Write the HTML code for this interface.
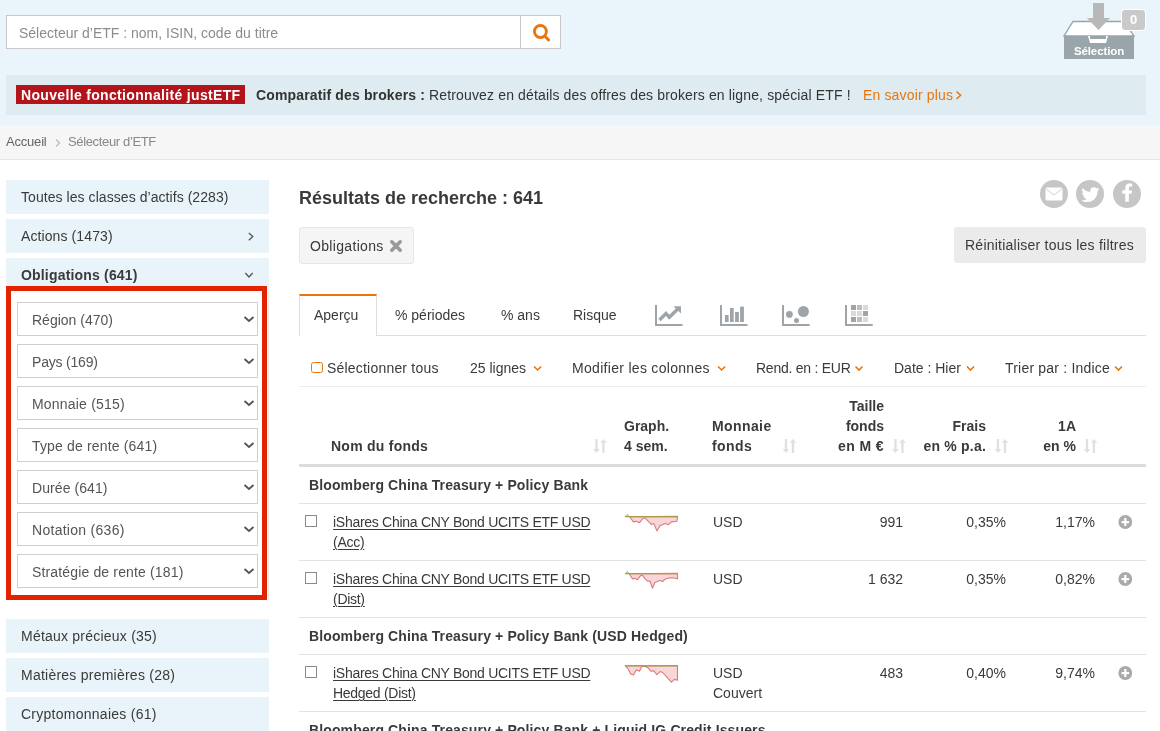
<!DOCTYPE html>
<html><head><meta charset="utf-8">
<style>
*{box-sizing:border-box;margin:0;padding:0}
html,body{width:1160px;height:731px;overflow:hidden;background:#fff}
body{position:relative;font-family:"Liberation Sans",sans-serif;font-size:14px;color:#3a3a3a;line-height:20px;-webkit-font-smoothing:antialiased}
.a{will-change:transform}
.a{position:absolute;white-space:nowrap}
.hdr{position:absolute;left:0;top:0;width:1160px;height:125px;background:#e9f5fa}
.search{position:absolute;left:6px;top:15px;width:555px;height:34px;background:#fff;border:1px solid #c8c8c8}
.search .div{position:absolute;left:513px;top:0;width:1px;height:32px;background:#c8c8c8}
.banner{position:absolute;left:6px;top:75px;width:1140px;height:40px;background:#deebf1}
.badge{position:absolute;left:16px;top:85px;width:229px;height:19px;background:#b3131a}
.bc{position:absolute;left:0;top:125px;width:1160px;height:35px;background:#f6f6f6;border-bottom:1px solid #e6e6e6}
.side{position:absolute;left:6px;width:263px;height:34px;background:#e8f4fa}
.redbox{position:absolute;left:6px;top:286px;width:261px;height:314px;border:5px solid #e22300;background:#fff}
.sel{position:absolute;left:17px;width:241px;height:34px;border:1px solid #cfcfcf;background:#fff}
.chev{position:absolute}
.line{position:absolute;height:1px;background:#e3e3e3}
.b{font-weight:bold}
.ul{text-decoration:underline;text-underline-offset:2px;text-decoration-thickness:1px}
.cb{position:absolute;width:12px;height:12px;border:1px solid #8a8a8a;background:#fff}
.r{text-align:right}
</style></head><body>

<!-- header -->
<div class="hdr"></div>
<div class="search"><div class="div"></div></div>
<div class="a" style="left:19px;top:23px;color:#8c8c8c">Sélecteur d’ETF : nom, ISIN, code du titre</div>
<svg class="a" style="left:530px;top:21px" width="22" height="22" viewBox="0 0 22 22">
 <circle cx="10.4" cy="10.5" r="6" fill="none" stroke="#e8760c" stroke-width="2.8"/>
 <line x1="14.8" y1="15" x2="18.6" y2="19" stroke="#e8760c" stroke-width="2.9" stroke-linecap="round"/>
</svg>

<!-- selection icon -->
<svg class="a" style="left:1060px;top:0" width="100" height="62" viewBox="1060 0 100 62">
 <polygon points="1073,21.5 1124,21.5 1134,36 1064,36" fill="#fff" stroke="#9aa5ab" stroke-width="1.4"/>
 <rect x="1064" y="36" width="70" height="23" fill="#9aa5ab"/>
 <polygon points="1088,36 1108,36 1106,43 1090,43" fill="#fff"/>
 <rect x="1090" y="36" width="16" height="3" fill="#9aa5ab"/>
 <rect x="1093" y="3" width="11" height="15" fill="#b8b8b8"/>
 <polygon points="1087,18 1110,18 1098.5,30" fill="#b8b8b8"/>
 <rect x="1121.5" y="9.5" width="24" height="21" rx="3.5" fill="#cacaca" stroke="#fff" stroke-width="1"/>
</svg>
<div class="a b" style="left:1064px;top:42.5px;width:70px;text-align:center;color:#fff;font-size:11.5px;line-height:16px;letter-spacing:-0.1px">Sélection</div>
<div class="a b" style="left:1122px;top:10px;width:23px;text-align:center;color:#fff;font-size:13px;line-height:20px">0</div>

<!-- banner -->
<div class="banner"></div>
<div class="badge"></div>
<div class="a b" style="left:21px;top:85px;color:#fff;letter-spacing:0.33px">Nouvelle fonctionnalité justETF</div>
<div class="a" style="left:256px;top:85px;color:#333;letter-spacing:0.14px"><b>Comparatif des brokers :</b> Retrouvez en détails des offres des brokers en ligne, spécial ETF !</div>
<div class="a" style="left:863px;top:85px;color:#e8760c;letter-spacing:0.15px">En savoir plus</div>
<svg class="a" style="left:954px;top:89px" width="10" height="12"><polyline points="2.5,2.5 6.6,6.3 2.5,10" fill="none" stroke="#e8760c" stroke-width="1.5"/></svg>

<!-- breadcrumb -->
<div class="bc"></div>
<div class="a" style="left:6px;top:132px;color:#666;font-size:13px;letter-spacing:-0.2px">Accueil</div>
<svg class="a" style="left:54px;top:138px" width="8" height="10"><polyline points="2,1.5 5.5,5 2,8.5" fill="none" stroke="#bbb" stroke-width="1.2"/></svg>
<div class="a" style="left:68px;top:132px;color:#888;font-size:13px;letter-spacing:-0.35px">Sélecteur d’ETF</div>

<!-- sidebar -->
<div class="side" style="top:180px"></div>
<div class="a" style="left:21px;top:187px;letter-spacing:0.06px">Toutes les classes d’actifs (2283)</div>
<div class="side" style="top:219px"></div>
<div class="a" style="left:21px;top:226px;letter-spacing:0.1px">Actions (1473)</div>
<div class="side" style="top:258px;height:34px"></div>
<div class="a b" style="left:21px;top:265px;letter-spacing:0.18px">Obligations (641)</div>
<div class="a" style="left:267px;top:291px;width:2px;height:308px;background:#f3f7f9;border-right:1px solid #ececec"></div>
<div class="redbox"></div>
<div class="sel" style="top:302px"></div><div class="a" style="left:32px;top:310px;color:#555">Région (470)</div>
<div class="sel" style="top:344px"></div><div class="a" style="left:32px;top:352px;color:#555;letter-spacing:-0.2px">Pays (169)</div>
<div class="sel" style="top:386px"></div><div class="a" style="left:32px;top:394px;color:#555;letter-spacing:0.2px">Monnaie (515)</div>
<div class="sel" style="top:428px"></div><div class="a" style="left:32px;top:436px;color:#555;letter-spacing:0.16px">Type de rente (641)</div>
<div class="sel" style="top:470px"></div><div class="a" style="left:32px;top:478px;color:#555;letter-spacing:0.08px">Durée (641)</div>
<div class="sel" style="top:512px"></div><div class="a" style="left:32px;top:520px;color:#555;letter-spacing:0.28px">Notation (636)</div>
<div class="sel" style="top:554px"></div><div class="a" style="left:32px;top:562px;color:#555;letter-spacing:0.15px">Stratégie de rente (181)</div>
<svg class="a" style="left:0;top:0" width="290" height="731">
 <g fill="none" stroke="#555" stroke-width="1.8">
  <polyline points="248.8,233 252.8,236.6 248.8,240.2" stroke-width="1.3"/>
  <polyline points="245.3,273 249,277 252.7,273" stroke-width="1.3"/>
  <polyline points="244.5,317 249,321 253.5,317"/>
  <polyline points="244.5,359 249,363 253.5,359"/>
  <polyline points="244.5,401 249,405 253.5,401"/>
  <polyline points="244.5,443 249,447 253.5,443"/>
  <polyline points="244.5,485 249,489 253.5,485"/>
  <polyline points="244.5,527 249,531 253.5,527"/>
  <polyline points="244.5,569 249,573 253.5,569"/>
  <polyline points="248,671.5 252,675.6 248,679.7" stroke-width="1.3"/>
 </g>
</svg>
<div class="side" style="top:619px"></div>
<div class="a" style="left:21px;top:626px;letter-spacing:0.22px">Métaux précieux (35)</div>
<div class="side" style="top:658px"></div>
<div class="a" style="left:21px;top:665px;letter-spacing:0.24px">Matières premières (28)</div>
<div class="side" style="top:697px"></div>
<div class="a" style="left:21px;top:704px;letter-spacing:0.26px">Cryptomonnaies (61)</div>

<!-- main -->
<div class="a b" style="left:299px;top:186px;font-size:18px;line-height:24px">Résultats de recherche : 641</div>
<svg class="a" style="left:1036px;top:176px" width="112" height="36" viewBox="1036 176 112 36">
 <circle cx="1054" cy="194" r="14" fill="#c6c6c6"/>
 <circle cx="1090" cy="194" r="14" fill="#c6c6c6"/>
 <circle cx="1127" cy="194" r="14" fill="#c6c6c6"/>
 <rect x="1045.5" y="187.5" width="17" height="13" rx="1.5" fill="#fff"/>
 <path transform="translate(1081.3,185.6) scale(0.0355)" fill="#fff" d="M459.37 151.716c.325 4.548.325 9.097.325 13.645 0 138.72-105.583 298.558-298.558 298.558-59.452 0-114.68-17.219-161.137-47.106 8.447.974 16.568 1.299 25.34 1.299 49.055 0 94.213-16.568 130.274-44.832-46.132-.975-84.792-31.188-98.112-72.772 6.498.974 12.995 1.624 19.818 1.624 9.421 0 18.843-1.3 27.614-3.573-48.081-9.747-84.143-51.98-84.143-102.985v-1.299c13.969 7.797 30.214 12.67 47.431 13.319-28.264-18.843-46.781-51.005-46.781-87.391 0-19.492 5.197-37.36 14.294-52.954 51.655 63.675 129.3 105.258 216.365 109.807-1.624-7.797-2.599-15.918-2.599-24.04 0-57.828 46.782-104.934 104.934-104.934 30.213 0 57.502 12.67 76.67 33.137 23.715-4.548 46.456-13.32 66.599-25.34-7.798 24.366-24.366 44.833-46.132 57.827 21.117-2.273 41.584-8.122 60.426-16.243-14.292 20.791-32.161 39.308-52.628 54.253z"/>
 <path transform="translate(1121.5,183.4) scale(0.036)" fill="#fff" d="M279.14 288l14.22-92.66h-88.91v-60.13c0-25.35 12.42-50.06 52.24-50.06h40.42V6.26S260.43 0 225.36 0c-73.22 0-121.08 44.38-121.08 121.06v70.62H22.89V288h81.39v224h100.17V288z"/>
 <polyline points="1045.5,188.5 1054,195 1062.5,188.5" fill="none" stroke="#c6c6c6" stroke-width="0.8"/>
</svg>

<div class="a" style="left:299px;top:227px;width:115px;height:37px;background:#f5f5f5;border:1px solid #e6e6e6;border-radius:3px"></div>
<div class="a" style="left:310px;top:236px;letter-spacing:0.33px">Obligations</div>
<svg class="a" style="left:389px;top:239px" width="14" height="14" viewBox="0 0 14 14"><path d="M2.8 2.8L11.2 11.2M11.2 2.8L2.8 11.2" stroke="#9a9a9a" stroke-width="3.6" stroke-linecap="round"/></svg>

<div class="a" style="left:954px;top:227px;width:192px;height:36px;background:#ebebeb;border-radius:3px"></div>
<div class="a" style="left:965px;top:235px;letter-spacing:0.24px">Réinitialiser tous les filtres</div>

<!-- tabs -->
<div class="line" style="left:376px;top:335px;width:770px;background:#dedede"></div>
<div class="a" style="left:299px;top:294px;width:78px;height:42px;border:1px solid #dedede;border-top:2px solid #e8760c;border-bottom:none;background:#fff"></div>
<div class="a" style="left:314px;top:305px">Aperçu</div>
<div class="a" style="left:395px;top:305px">% périodes</div>
<div class="a" style="left:501px;top:305px">% ans</div>
<div class="a" style="left:573px;top:305px">Risque</div>

<!-- toolbar -->
<div class="line" style="left:299px;top:386px;width:847px;background:#ececec"></div>
<div class="a" style="left:311px;top:362px;width:11.5px;height:11.2px;border:1.3px solid #e8760c;border-radius:2.5px"></div>
<div class="a" style="left:327px;top:358px;letter-spacing:0.2px">Sélectionner tous</div>
<div class="a" style="left:470px;top:358px">25 lignes</div>
<div class="a" style="left:572px;top:358px;letter-spacing:0.3px">Modifier les colonnes</div>
<div class="a" style="left:756px;top:358px;letter-spacing:-0.25px">Rend. en : EUR</div>
<div class="a" style="left:894px;top:358px">Date : Hier</div>
<div class="a" style="left:1005px;top:358px;letter-spacing:0.2px">Trier par : Indice</div>

<!-- table header -->
<div class="a b" style="left:331px;top:436px;letter-spacing:0.25px">Nom du fonds</div>
<div class="a b" style="left:624px;top:416px">Graph.<br>4 sem.</div>
<div class="a b" style="left:712px;top:416px;letter-spacing:0.4px">Monnaie<br>fonds</div>
<div class="a b r" style="left:784px;top:396px;width:100px">Taille<br>fonds<br><span style="letter-spacing:0.4px">en M €</span></div>
<div class="a b r" style="left:886px;top:416px;width:100px">Frais<br><span style="letter-spacing:0.2px">en % p.a.</span></div>
<div class="a b r" style="left:976px;top:416px;width:100px">1A<br>en %</div>
<div class="a" style="left:299px;top:464px;width:847px;height:3px;background:#dcdcdc"></div>

<!-- rows -->
<div class="a b" style="letter-spacing:0.13px;left:309px;top:475px">Bloomberg China Treasury + Policy Bank</div>
<div class="line" style="left:299px;top:503px;width:847px"></div>
<div class="cb" style="left:305px;top:515px"></div>
<div class="a ul" style="letter-spacing:-0.28px;left:333px;top:512px;line-height:20px">iShares China CNY Bond UCITS ETF USD<br>(Acc)</div>
<div class="a" style="left:713px;top:512px">USD</div>
<div class="a r" style="left:803px;top:512px;width:100px">991</div>
<div class="a r" style="left:906px;top:512px;width:100px">0,35%</div>
<div class="a r" style="left:995px;top:512px;width:100px">1,17%</div>

<div class="line" style="left:299px;top:560px;width:847px"></div>
<div class="cb" style="left:305px;top:572px"></div>
<div class="a ul" style="letter-spacing:-0.28px;left:333px;top:569px;line-height:20px">iShares China CNY Bond UCITS ETF USD<br>(Dist)</div>
<div class="a" style="left:713px;top:569px">USD</div>
<div class="a r" style="left:803px;top:569px;width:100px">1 632</div>
<div class="a r" style="left:906px;top:569px;width:100px">0,35%</div>
<div class="a r" style="left:995px;top:569px;width:100px">0,82%</div>

<div class="line" style="left:299px;top:617px;width:847px"></div>
<div class="a b" style="letter-spacing:0.13px;left:309px;top:626px">Bloomberg China Treasury + Policy Bank (USD Hedged)</div>
<div class="line" style="left:299px;top:654px;width:847px"></div>
<div class="cb" style="left:305px;top:666px"></div>
<div class="a ul" style="letter-spacing:-0.28px;left:333px;top:663px;line-height:20px">iShares China CNY Bond UCITS ETF USD<br>Hedged (Dist)</div>
<div class="a" style="left:713px;top:663px;line-height:20px">USD<br>Couvert</div>
<div class="a r" style="left:803px;top:663px;width:100px">483</div>
<div class="a r" style="left:906px;top:663px;width:100px">0,40%</div>
<div class="a r" style="left:995px;top:663px;width:100px">9,74%</div>
<div class="line" style="left:299px;top:711px;width:847px"></div>
<div class="a b" style="letter-spacing:0.13px;left:309px;top:720px">Bloomberg China Treasury + Policy Bank + Liquid IG Credit Issuers</div>


<!-- tab icons -->
<svg class="a" style="left:640px;top:290px" width="250" height="45" viewBox="640 290 250 45">
 <g fill="#9ea4a7">
  <rect x="655" y="305" width="2" height="21"/><rect x="655" y="324" width="27.5" height="2"/>
  <polyline points="659.5,320 666,313.5 669.3,317.3 677.5,309.2" fill="none" stroke="#9ea4a7" stroke-width="3.4"/>
  <polygon points="673.5,306.2 681,306.2 681,313.6"/>
  <rect x="720" y="305" width="2" height="21"/><rect x="720" y="324" width="27.5" height="2"/>
  <rect x="725" y="315" width="3.6" height="7"/><rect x="730" y="308" width="3.7" height="14"/>
  <rect x="735.1" y="312" width="3.8" height="10"/><rect x="740.1" y="306.6" width="3.8" height="15.4"/>
  <rect x="782" y="305" width="2" height="21"/><rect x="782" y="324" width="27.6" height="2"/>
  <circle cx="789.4" cy="314.4" r="3.4"/><circle cx="796.5" cy="320.4" r="2.5"/><circle cx="803.4" cy="311.5" r="5.5"/>
  <rect x="845" y="305" width="2" height="21"/><rect x="845" y="324" width="27.7" height="2"/>
 </g>
 <g>
  <rect x="851" y="305" width="5" height="5" fill="#a3a3a3"/><rect x="857" y="305" width="5" height="5" fill="#bdbdbd"/><rect x="863" y="305" width="5" height="5" fill="#dadada"/>
  <rect x="851" y="311" width="5" height="5" fill="#dadada"/><rect x="857" y="311" width="5" height="5" fill="#dadada"/><rect x="863" y="311" width="5" height="5" fill="#a3a3a3"/>
  <rect x="851" y="317" width="5" height="5" fill="#a3a3a3"/><rect x="857" y="317" width="5" height="5" fill="#bdbdbd"/><rect x="863" y="317" width="5" height="5" fill="#dadada"/>
 </g>
</svg>
<!-- toolbar chevrons -->
<svg class="a" style="left:0;top:0" width="1160" height="731" viewBox="0 0 1160 731">
 <g fill="none" stroke="#e8760c" stroke-width="1.6">
  <polyline points="534,366.5 537.6,370 541.2,366.5"/>
  <polyline points="718,366.5 721.6,370 725.2,366.5"/>
  <polyline points="855.5,366.5 859,370 862.5,366.5"/>
  <polyline points="967,366.5 970.5,370 974,366.5"/>
  <polyline points="1115,366.5 1118.5,370 1122,366.5"/>
 </g>
 <g id="sorts" fill="#e0e0e0">
  <g id="srt"><rect x="595.3" y="439" width="2.3" height="11"/><polygon points="593.2,449 599.8,449 596.5,453"/><rect x="602.3" y="442" width="2.3" height="11"/><polygon points="600.2,442.8 606.8,442.8 603.5,439"/></g>
  <g transform="translate(189.5,0)"><rect x="595.3" y="439" width="2.3" height="11"/><polygon points="593.2,449 599.8,449 596.5,453"/><rect x="602.3" y="442" width="2.3" height="11"/><polygon points="600.2,442.8 606.8,442.8 603.5,439"/></g>
  <g transform="translate(299,0)"><rect x="595.3" y="439" width="2.3" height="11"/><polygon points="593.2,449 599.8,449 596.5,453"/><rect x="602.3" y="442" width="2.3" height="11"/><polygon points="600.2,442.8 606.8,442.8 603.5,439"/></g>
  <g transform="translate(401.5,0)"><rect x="595.3" y="439" width="2.3" height="11"/><polygon points="593.2,449 599.8,449 596.5,453"/><rect x="602.3" y="442" width="2.3" height="11"/><polygon points="600.2,442.8 606.8,442.8 603.5,439"/></g>
  <g transform="translate(490.5,0)"><rect x="595.3" y="439" width="2.3" height="11"/><polygon points="593.2,449 599.8,449 596.5,453"/><rect x="602.3" y="442" width="2.3" height="11"/><polygon points="600.2,442.8 606.8,442.8 603.5,439"/></g>

 </g>
 <g id="plus"><circle cx="1125.3" cy="522" r="6.9" fill="#aaa"/><rect x="1121.5" y="521" width="7.6" height="2.2" fill="#fff"/><rect x="1124.2" y="518" width="2.2" height="8" fill="#fff"/></g>
 <g transform="translate(0,57)"><circle cx="1125.3" cy="522" r="6.9" fill="#aaa"/><rect x="1121.5" y="521" width="7.6" height="2.2" fill="#fff"/><rect x="1124.2" y="518" width="2.2" height="8" fill="#fff"/></g><g transform="translate(0,151)"><circle cx="1125.3" cy="522" r="6.9" fill="#aaa"/><rect x="1121.5" y="521" width="7.6" height="2.2" fill="#fff"/><rect x="1124.2" y="518" width="2.2" height="8" fill="#fff"/></g>
 <!-- sparklines -->
 <g stroke-linejoin="round">
  <path d="M625,516.6 L627.6,514.3 L629.3,516.6Z" fill="#c9e3a7" stroke="#a6cf7a" stroke-width="1"/>
  <path d="M629.7,516.7 L633.4,521.9 L636.2,521.2 L639.3,522.8 L642.4,519.1 L645.2,518.1 L648.6,521.6 L651.4,524.4 L653.8,523.6 L656.9,530.9 L660,525.7 L665.2,523.6 L668.6,524.7 L671.4,521.9 L676.9,521.2 L677.6,516.4Z" fill="#f8d5d6" stroke="#dc7b7e" stroke-width="1.1"/>
  <line x1="625" y1="516.6" x2="678" y2="516.6" stroke="#ab9b48" stroke-width="1.3"/>
  <path d="M625.3,573.6 L627.4,571.3 L629.2,573.6Z" fill="#c9e3a7" stroke="#a6cf7a" stroke-width="1"/>
  <path d="M629.2,573.75 L632.5,578.9 L634.9,578.3 L637.3,579.8 L640.3,575.9 L642.5,575.3 L645.2,578.9 L647.9,581.3 L650,581 L652.4,588.2 L654.8,582.5 L659.7,580.4 L662.7,581.6 L664.8,579.2 L669.9,577.7 L674.7,578 L677.5,578.9 L677.5,573.4Z" fill="#f8d5d6" stroke="#dc7b7e" stroke-width="1.1"/>
  <line x1="625.3" y1="573.6" x2="677.8" y2="573.6" stroke="#ab9b48" stroke-width="1.3"/>
  <path d="M625.1,665.7 L627.7,668.3 L630.7,674 L633.4,674.9 L636.4,669.8 L639.4,671.3 L641.9,666.5 L643.4,665.9 L647.6,667.4 L651.2,671.3 L653.6,670.6 L656.9,674.6 L660,671.6 L662.7,672.5 L671.4,682.2 L674.4,679.4 L677.5,680.3 L677.5,665.6Z" fill="#f8d5d6" stroke="#dc7b7e" stroke-width="1.1"/>
  <line x1="625.1" y1="665.8" x2="677.8" y2="665.8" stroke="#ab9b48" stroke-width="1.3"/>
 </g>
</svg>
</body></html>
